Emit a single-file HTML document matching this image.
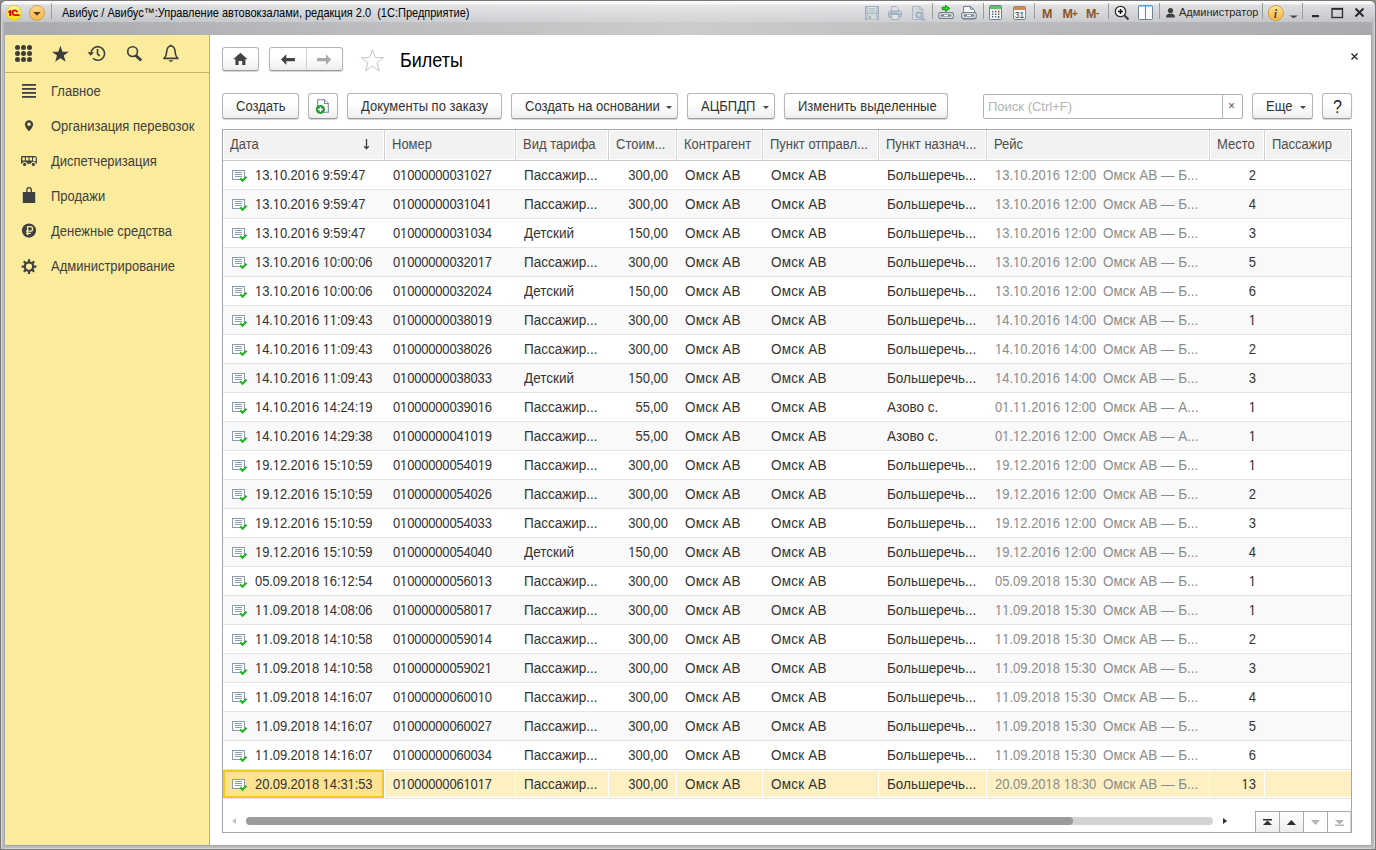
<!DOCTYPE html><html><head><meta charset="utf-8"><style>*{box-sizing:border-box;margin:0;padding:0}
html,body{width:1376px;height:850px;overflow:hidden}
body{background:#8a8a84;font-family:"Liberation Sans",sans-serif;position:relative}
.abs{position:absolute}
#win{position:absolute;left:0;top:0;width:1376px;height:850px;border-radius:6px 6px 0 0;background:#787878}
#title{position:absolute;left:1px;top:1px;width:1374px;height:21px;border-radius:5px 5px 0 0;background:linear-gradient(90deg,rgba(255,255,255,0) 0,rgba(255,255,255,.28) 50%,rgba(255,255,255,0) 100%),linear-gradient(#fbfbfb 0,#f6f6f6 3px,#dcdde0 4px,#d0d1d4 12px,#c3c4c7 21px)}
#band{position:absolute;left:5px;top:22px;width:1366px;height:13px;background:linear-gradient(90deg,rgba(255,255,255,0) 0,rgba(255,255,255,.4) 50%,rgba(255,255,255,0) 100%),linear-gradient(#abacaf,#a8a9ac)}
#lframe{position:absolute;left:1px;top:22px;width:4px;height:827px;background:linear-gradient(90deg,#d6d6d6 0,#d6d6d6 1px,#bdbdbd 1px,#b9b9b9 3px,#a3a6ab 3px)}
#rframe{position:absolute;left:1371px;top:22px;width:4px;height:827px;background:linear-gradient(90deg,#a3a6ab 0,#a3a6ab 1px,#b9b9b9 1px,#bdbdbd 3px,#d6d6d6 3px)}
#bframe{position:absolute;left:4px;top:845px;width:1368px;height:4px;background:linear-gradient(#a3a6ab 0,#a3a6ab 1px,#b9b9b9 1px,#bdbdbd 3px,#d6d6d6 3px)}
#side{position:absolute;left:5px;top:35px;width:205px;height:810px;background:#fbeb9c;border-right:1px solid #bfb262}
#content{position:absolute;left:210px;top:35px;width:1161px;height:810px;background:#fff}
.ttl{position:absolute;left:62px;top:4px;font-size:11px;color:#000;white-space:nowrap;line-height:16px}
.sdiv{position:absolute;left:5px;top:72px;width:204px;height:1px;background:#c3b566}
.nav{position:absolute;left:51px;font-size:13px;color:#404040;white-space:nowrap;line-height:16px}
.btn{position:absolute;height:26px;border:1px solid #b5b5b5;border-bottom-color:#9a9a9a;border-radius:3px;background:linear-gradient(#ffffff 40%,#eeeeee);box-shadow:0 1px 1px rgba(0,0,0,.18);font-size:13px;color:#333;line-height:24px;white-space:nowrap}
.btn span{position:absolute;top:1px}
.dd{position:absolute;width:0;height:0;border-left:3px solid transparent;border-right:3px solid transparent;border-top:3px solid #444}
#tbl{position:absolute;left:222px;top:129px;width:1130px;height:704px;border:1px solid #a5a5a5;background:#fff;overflow:hidden}
.hcell{position:absolute;top:131px;height:28px;background:#f2f2f2;font-size:13px;color:#4d4d4d;line-height:28px;white-space:nowrap}
.hsep{position:absolute;top:130px;width:1px;height:30px;background:#d2d2d2}
.hline{position:absolute;left:223px;top:160px;width:1128px;height:1px;background:#cdcdcd}
.row{position:absolute;left:223px;width:1128px;height:29px;border-bottom:1px solid #e4e4e4;background:#fff}
.row.alt{background:#f9f9f9}
.row.sel{background:#fff}
.vsep{position:absolute;top:0;width:1px;height:28px;background:#fff}
.selcell{position:absolute;left:0;top:0;width:161px;height:28px;border:2px solid #f8c51c;background:#fde292}
.c{position:absolute;top:0;line-height:29px;font-size:13px;color:#333;white-space:nowrap}
.c.g{color:#8c8c8c}
.ic{position:absolute}
.c.n{letter-spacing:-0.18px}
.c.t{font-size:13.5px}
.c.o{letter-spacing:0.2px}
.selbg{position:absolute;top:1px;height:26px;background:#fdf0c2}
.c{transform:scaleY(1.1);transform-origin:0 19px}
.nav{transform:scaleY(1.1);transform-origin:0 12.5px}
.hcell span{transform:scaleY(1.1);transform-origin:0 18.5px}
.btn span{transform:scaleY(1.1);transform-origin:0 16.5px}
.ttl{transform:scaleY(1.1);transform-origin:0 11.98px}
.c.d{letter-spacing:-0.1px}
.q1{font-style:normal;display:inline-block;clip-path:polygon(0 0,100% 0,100% 18px,4.6px 18px,4.6px 100%,3.1px 100%,3.1px 18px,0 18px)}
</style></head><body><div id="win"></div>
<div id="title"></div>
<div id="lframe"></div><div id="rframe"></div><div id="bframe"></div>
<div id="band"></div>
<svg class="abs" style="left:0;top:0" width="1376" height="22" viewBox="0 0 1376 22">
 <!-- 1C logo -->
 <defs>
  <linearGradient id="gy" x1="0" y1="0" x2="0" y2="1"><stop offset="0" stop-color="#fff6a8"/><stop offset="1" stop-color="#ffe000"/></linearGradient>
  <linearGradient id="go" x1="0" y1="0" x2="0" y2="1"><stop offset="0" stop-color="#ffd490"/><stop offset="1" stop-color="#ffb844"/></linearGradient>
  <linearGradient id="gi" x1="0" y1="0" x2="0" y2="1"><stop offset="0" stop-color="#ffe49a"/><stop offset="1" stop-color="#f5b43c"/></linearGradient>
 </defs>
 <circle cx="14" cy="12.9" r="7.5" fill="url(#gy)" stroke="#e3c94a" stroke-width="1"/>
 <path d="M8.1 11.6 L10.2 10 L11.1 10 L11.1 15.9 L9.2 15.9 L9.2 12.2 L8.3 12.7Z" fill="#e00000"/>
 <path d="M17.1 12.3 A2.35 2.35 0 1 0 14.7 15.1 H19.5" fill="none" stroke="#e00000" stroke-width="1.7"/>
 <circle cx="37" cy="12.9" r="7.5" fill="url(#go)" stroke="#c9a24a" stroke-width="1"/>
 <path d="M33.2 12 L40.8 12 L37 15.7Z" fill="#4d3d22"/>
 <rect x="51" y="3" width="1" height="16" fill="#9c9c9c"/>
 <!-- disabled icons -->
 <rect x="865.5" y="6.5" width="13" height="13" fill="#b9c4d1" stroke="#a2afbf" stroke-width="1"/>
 <rect x="868" y="7" width="8" height="5" fill="#dfe3e8"/>
 <path d="M869 8.6 H875 M869 10.6 H875" stroke="#a7b6c6" stroke-width="1"/>
 <rect x="868" y="14.5" width="8" height="5" fill="#d3dcd3"/>
 <rect x="869" y="16" width="2" height="3" fill="#a2afbf"/>
 <path d="M891.5 6.5 H896.5 L898.5 8.5 V11 H891.5Z" fill="#e2e2e2" stroke="#a5b2c1" stroke-width="1"/>
 <rect x="888.5" y="11" width="13" height="6.5" rx="1.8" fill="#b6c1ce" stroke="#a2afbf" stroke-width="1"/>
 <path d="M890 13.3 H900" stroke="#98a6b6" stroke-width="0.9"/>
 <rect x="897.5" y="12" width="1" height="1" fill="#eef"/><rect x="899.3" y="12" width="1" height="1" fill="#eef"/>
 <rect x="891.5" y="14.5" width="7" height="5" fill="#e4e4e4" stroke="#a5b2c1" stroke-width="1"/>
 <path d="M912.5 6.5 L919.8 6.5 L923 9.7 L923 19.5 L912.5 19.5Z" fill="#d8d8d8" stroke="#a9b6c5" stroke-width="1"/>
 <path d="M919.8 6.5 V9.7 H923" fill="none" stroke="#a9b6c5" stroke-width="1"/>
 <circle cx="919" cy="15" r="2.7" fill="#d8d8d8" stroke="#9fb0bf" stroke-width="1.8"/>
 <path d="M921 17 L924.5 20.5" stroke="#9fb0bf" stroke-width="2.2"/>
 <rect x="932" y="3" width="1" height="16" fill="#9c9c9c"/>
 <!-- link icons -->
 <path d="M942.2 7.2 H945.5 V5.4 L949.8 8.4 L945.5 11.4 V9.6 H942.2Z" fill="#22e022" stroke="#0d6e0d" stroke-width="0.8" stroke-linejoin="round"/>
 <rect x="938.7" y="12.6" width="14.6" height="5.8" rx="2" fill="#fafafa" stroke="#707d8a" stroke-width="1.1"/>
 <rect x="940.4" y="14.3" width="11.2" height="2.4" rx="0.8" fill="#7a8794"/>
 <rect x="944" y="14.9" width="4" height="1.2" fill="#fff"/>
 <path d="M963.6 6.4 H970.5 L974.5 10.4 V12.6 H963.6Z" fill="#fbfbfb" stroke="#6c7a88" stroke-width="1"/>
 <path d="M970.5 6.4 V9.2 H973.8" fill="none" stroke="#6c7a88" stroke-width="1"/>
 <rect x="961.6" y="12.6" width="14.6" height="5.8" rx="2" fill="#fafafa" stroke="#707d8a" stroke-width="1.1"/>
 <rect x="963.3" y="14.3" width="11.2" height="2.4" rx="0.8" fill="#7a8794"/>
 <rect x="967" y="14.9" width="4" height="1.2" fill="#fff"/>
 <rect x="963" y="18.6" width="12" height="1.2" fill="#8593a1"/>
 <rect x="983" y="3" width="1" height="16" fill="#9c9c9c"/>
 <!-- calculator -->
 <rect x="989.5" y="5.5" width="12" height="14" rx="1" fill="#eef2f6" stroke="#6f7f90" stroke-width="1"/>
 <rect x="990" y="6" width="11" height="3" fill="#5ec35e"/>
 <g fill="#44505c"><rect x="992" y="11" width="1.3" height="1.3"/><rect x="995" y="11" width="1.3" height="1.3"/><rect x="992" y="13.5" width="1.3" height="1.3"/><rect x="995" y="13.5" width="1.3" height="1.3"/><rect x="998" y="13.5" width="1.3" height="1.3"/><rect x="992" y="16" width="1.3" height="1.3"/><rect x="995" y="16" width="1.3" height="1.3"/><rect x="998" y="16" width="1.3" height="2"/></g>
 <rect x="998" y="10.5" width="1.3" height="2" fill="#e03030"/>
 <!-- calendar -->
 <rect x="1013.5" y="6.5" width="12" height="13" rx="1.5" fill="#f8f8f8" stroke="#7b8794" stroke-width="1"/>
 <path d="M1013.5 10 L1013.5 8 Q1013.5 6.5 1015 6.5 L1024 6.5 Q1025.5 6.5 1025.5 8 L1025.5 10Z" fill="#c98a55"/>
 <text x="1019.5" y="18.2" font-size="8.5" font-family="Liberation Sans" text-anchor="middle" fill="#333">31</text>
 <rect x="1034" y="3" width="1" height="16" fill="#9c9c9c"/>
 <!-- M buttons -->
 <g font-family="Liberation Sans" font-weight="bold" fill="#8c5526" font-size="12.5">
  <text x="1042" y="17.8">M</text>
  <text x="1062.5" y="17.8">M</text><text x="1072" y="16.5" font-size="10">+</text>
  <text x="1086" y="17.8">M</text><text x="1096" y="16" font-size="10">-</text>
 </g>
 <rect x="1108" y="3" width="1" height="16" fill="#9c9c9c"/>
 <!-- zoom -->
 <circle cx="1120.5" cy="11.5" r="5.2" fill="#fafafa" stroke="#2f2f2f" stroke-width="1.3"/>
 <path d="M1118 11.5 H1123 M1120.5 9 V14" stroke="#111" stroke-width="1.5"/>
 <path d="M1124.5 15.5 L1128.5 19.5" stroke="#3a3a3a" stroke-width="2"/>
 <!-- panel -->
 <rect x="1138.5" y="5.5" width="14" height="14" rx="1" fill="#fafafa" stroke="#6f7f90" stroke-width="1"/>
 <rect x="1139" y="5" width="13" height="1.5" fill="#4aa0e8"/>
 <rect x="1145" y="6" width="1" height="13" fill="#6f7f90"/>
 <rect x="1159" y="3" width="1" height="16" fill="#9c9c9c"/>
 <!-- user -->
 <circle cx="1170.5" cy="10.5" r="2.6" fill="#3f3f3f"/>
 <path d="M1166 17.5 C1166 14.5 1167.8 13.5 1170.5 13.5 C1173.2 13.5 1175 14.5 1175 17.5Z" fill="#3f3f3f"/>
 <rect x="1262" y="3" width="1" height="16" fill="#9c9c9c"/>
 <circle cx="1275.8" cy="13" r="7.6" fill="url(#gi)" stroke="#d0a040" stroke-width="1"/>
 <text x="1275.5" y="17.5" font-family="Liberation Serif" font-weight="bold" font-style="italic" font-size="12" text-anchor="middle" fill="#5a4a30">i</text>
 <path d="M1289.5 15.5 H1298 L1293.8 18.2Z" fill="#444"/>
 <rect x="1302" y="3" width="1" height="16" fill="#9c9c9c"/>
 <rect x="1312" y="15" width="7" height="2.2" fill="#2a2a2a"/>
 <rect x="1332" y="8.5" width="10.5" height="9" fill="none" stroke="#2a2a2a" stroke-width="1.3"/>
 <rect x="1332" y="8" width="10.5" height="1.8" fill="#2a2a2a"/>
 <path d="M1355.5 8.5 L1363.5 16.5 M1363.5 8.5 L1355.5 16.5" stroke="#2a2a2a" stroke-width="2"/>
</svg>
<div class="abs" style="left:1179px;top:5px;font-size:11px;line-height:14px;color:#302818;white-space:nowrap">Администратор</div>
<div class="ttl" style="top:5px">Авибус / Авибус™:Управление автовокзалами, редакция 2.0&nbsp; (1С:Предприятие)</div>
<div id="side"></div>
<div class="sdiv"></div>
<div id="content"></div>
<svg class="abs" style="left:0;top:35px" width="210" height="250" viewBox="0 35 210 250">
 <g fill="#3d3d3d">
  <circle cx="17.5" cy="47.5" r="2.5"/><circle cx="23.5" cy="47.5" r="2.5"/><circle cx="29.5" cy="47.5" r="2.5"/>
  <circle cx="17.5" cy="53.5" r="2.5"/><circle cx="23.5" cy="53.5" r="2.5"/><circle cx="29.5" cy="53.5" r="2.5"/>
  <circle cx="17.5" cy="59.5" r="2.5"/><circle cx="23.5" cy="59.5" r="2.5"/><circle cx="29.5" cy="59.5" r="2.5"/>
  <path d="M60.4 45.8 L62.5 51.7 L68.8 51.8 L63.8 55.6 L65.6 61.8 L60.4 58.2 L55.2 61.8 L57 55.6 L52 51.8 L58.3 51.7Z"/>
 </g>
 <g fill="none" stroke="#3d3d3d" stroke-width="1.6">
  <path d="M91 53.5 A6.8 6.8 0 1 1 93 58.3"/>
  <path d="M97.5 49 V53.8 L99.8 56"/>
  <circle cx="132.6" cy="51.6" r="4.9"/>
 </g>
 <path d="M87.5 52.2 L94 52.2 L90.8 55.8Z" fill="#3d3d3d"/>
 <path d="M135.8 55.5 L141.2 60.5" stroke="#3d3d3d" stroke-width="3"/>
 <path d="M170.9 45.8 C167.6 46.3 166.7 49.8 166.5 53 C166.3 55.6 165.4 57.2 163.9 58.4 L177.9 58.4 C176.4 57.2 175.5 55.6 175.3 53 C175.1 49.8 174.2 46.3 170.9 45.8Z" fill="none" stroke="#3d3d3d" stroke-width="1.6" stroke-linejoin="round"/>
 <circle cx="170.9" cy="45.3" r="0.9" fill="#3d3d3d"/>
 <path d="M168.6 60.2 H173.2 Q172.6 61.7 170.9 61.7 Q169.2 61.7 168.6 60.2Z" fill="#3d3d3d"/>
 <g fill="#404040">
  <rect x="22" y="84" width="14" height="1.8"/><rect x="22" y="88" width="14" height="1.8"/><rect x="22" y="92" width="14" height="1.8"/><rect x="22" y="96" width="14" height="1.8"/>
  <path d="M29 120.3 C26.6 120.3 24.9 122.1 24.9 124.4 C24.9 127.2 29 131.2 29 131.2 C29 131.2 33.1 127.2 33.1 124.4 C33.1 122.1 31.4 120.3 29 120.3Z"/>
  <path d="M22.3 156 H35 Q36.9 156 36.9 158.5 V163.7 H21 V157.3 Q21 156 22.3 156Z"/>
  <rect x="22.8" y="192" width="12.4" height="11"/>
  <circle cx="29" cy="230.6" r="7.1"/>
 </g>
 <circle cx="29" cy="124.3" r="1.7" fill="#fbeb9c"/>
 <g fill="#fbeb9c">
  <rect x="22.3" y="157.3" width="2.6" height="3.2" rx="0.6"/><rect x="25.9" y="157.3" width="2.6" height="3.2" rx="0.6"/><rect x="29.5" y="157.3" width="2.6" height="3.2" rx="0.6"/><rect x="33.1" y="157.3" width="2.6" height="4" rx="0.6"/>
  <circle cx="24.6" cy="164.4" r="2.6"/><circle cx="33.4" cy="164.4" r="2.6"/>
 </g>
 <g fill="#404040"><circle cx="24.6" cy="164.4" r="1.6"/><circle cx="33.4" cy="164.4" r="1.6"/></g>
 <path d="M26.9 192.5 V190 Q26.9 187.7 29.1 187.7 Q31.3 187.7 31.3 190 V192.5" fill="none" stroke="#404040" stroke-width="1.3"/>
 <path d="M27.6 235.3 V226.6 H30.3 Q32.6 226.6 32.6 228.9 Q32.6 231.2 30.3 231.2 H26 M26 233.3 H30.8" fill="none" stroke="#fbeb9c" stroke-width="1.3"/>
 <circle cx="29" cy="266.6" r="4.2" fill="none" stroke="#404040" stroke-width="2.2"/>
 <g stroke="#404040" stroke-width="2.2">
  <path d="M29 259.2 V262 M29 271.2 V274 M21.6 266.6 H24.4 M33.6 266.6 H36.4 M23.8 261.4 L25.7 263.3 M32.3 269.9 L34.2 271.8 M23.8 271.8 L25.7 269.9 M32.3 263.3 L34.2 261.4"/>
 </g>
</svg>
<div class="nav" style="top:84px">Главное</div>
<div class="nav" style="top:119px">Организация перевозок</div>
<div class="nav" style="top:154px">Диспетчеризация</div>
<div class="nav" style="top:189px">Продажи</div>
<div class="nav" style="top:224px">Денежные средства</div>
<div class="nav" style="top:259px">Администрирование</div>

<div class="btn" style="left:222px;top:47px;width:37px;height:24px"></div>
<div class="btn" style="left:269px;top:47px;width:74px;height:24px"></div>
<div class="abs" style="left:400px;top:49px;font-size:18px;color:#000;line-height:24px;transform:scaleY(1.1);transform-origin:0 17.96px">Билеты</div>

<div class="btn" style="left:222px;top:93px;width:77px"><span style="left:13px">Создать</span></div>
<div class="btn" style="left:308px;top:93px;width:30px"></div>
<div class="btn" style="left:347px;top:93px;width:155px"><span style="left:13px">Документы по заказу</span></div>
<div class="btn" style="left:511px;top:93px;width:167px"><span style="left:13px">Создать на основании</span><i class="dd" style="left:154px;top:12px"></i></div>
<div class="btn" style="left:687px;top:93px;width:88px"><span style="left:13px">АЦБПДП</span><i class="dd" style="left:75px;top:12px"></i></div>
<div class="btn" style="left:784px;top:93px;width:164px"><span style="left:13px">Изменить выделенные</span></div>
<div class="abs" style="left:983px;top:94px;width:260px;height:25px;border:1px solid #b0b0b0;border-radius:2px;background:#fff"><span class="abs" style="left:4px;top:0;line-height:23px;font-size:13px;color:#b3b3b3;white-space:nowrap">Поиск (Ctrl+F)</span><div class="abs" style="left:238px;top:0;width:1px;height:23px;background:#b8b8b8"></div><span class="abs" style="left:244px;top:0;line-height:22px;font-size:12px;color:#555">×</span></div>
<div class="btn" style="left:1252px;top:93px;width:61px"><span style="left:13px">Еще</span><i class="dd" style="left:47px;top:12px"></i></div>
<div class="btn" style="left:1322px;top:93px;width:30px"><span style="left:10px;top:2px;font-size:16px;color:#1a1a1a">?</span></div>

<svg class="abs" style="left:210px;top:35px" width="1161" height="90" viewBox="210 35 1161 90">
 <path d="M240.4 52.7 L247.6 59.3 L245.4 59.3 L245.4 64.9 L242.2 64.9 L242.2 61 L238.6 61 L238.6 64.9 L235.4 64.9 L235.4 59.3 L233.2 59.3Z" fill="#444"/>
 <path d="M281 59.6 L286.3 54.2 L286.3 57.9 L294.9 57.9 L294.9 61.3 L286.3 61.3 L286.3 65 Z" fill="#444"/>
 <path d="M331.2 59.6 L325.9 54.2 L325.9 57.9 L317.1 57.9 L317.1 61.3 L325.9 61.3 L325.9 65 Z" fill="#a9a9a9"/>
 <rect x="306" y="48" width="1" height="22" fill="#d0d0d0"/>
 <path d="M372.4 49.6 L375.2 57.5 L383.6 57.7 L376.9 62.8 L379.3 70.8 L372.4 66 L365.5 70.8 L367.9 62.8 L361.2 57.7 L369.6 57.5Z" fill="#fff" stroke="#c2c6cb" stroke-width="1"/>
 <path d="M1351.5 53.5 L1357.5 59.5 M1357.5 53.5 L1351.5 59.5" stroke="#222" stroke-width="1.25"/>
 <!-- doc add icon -->
 <path d="M317.7 99.7 L324.5 99.7 L328.3 103.5 L328.3 112.3 L317.7 112.3Z" fill="#fff" stroke="#74859a" stroke-width="1.1"/>
 <path d="M324.5 99.7 L324.5 103.5 L328.3 103.5" fill="#fff" stroke="#74859a" stroke-width="1.1"/>
 <circle cx="320.4" cy="109.4" r="4.5" fill="#1f9a2e"/>
 <path d="M317.9 109.5 H322.9 M320.4 107 V112" stroke="#fff" stroke-width="1.5"/>
</svg>
<div id="tbl"></div><div class="hcell" style="left:224px;width:159px"><span style="position:absolute;left:6px">Дата</span></div><div class="hcell" style="left:386px;width:128px"><span style="position:absolute;left:6px">Номер</span></div><div class="hsep" style="left:384px"></div><div class="hcell" style="left:517px;width:90px"><span style="position:absolute;left:6px">Вид тарифа</span></div><div class="hsep" style="left:515px"></div><div class="hcell" style="left:610px;width:65px"><span style="position:absolute;left:6px">Стоим...</span></div><div class="hsep" style="left:608px"></div><div class="hcell" style="left:678px;width:83px"><span style="position:absolute;left:6px">Контрагент</span></div><div class="hsep" style="left:676px"></div><div class="hcell" style="left:764px;width:113px"><span style="position:absolute;left:6px">Пункт отправл...</span></div><div class="hsep" style="left:762px"></div><div class="hcell" style="left:880px;width:105px"><span style="position:absolute;left:6px">Пункт назнач...</span></div><div class="hsep" style="left:878px"></div><div class="hcell" style="left:988px;width:220px"><span style="position:absolute;left:6px">Рейс</span></div><div class="hsep" style="left:986px"></div><div class="hcell" style="left:1211px;width:52px"><span style="position:absolute;left:6px">Место</span></div><div class="hsep" style="left:1209px"></div><div class="hcell" style="left:1266px;width:84px"><span style="position:absolute;left:6px">Пассажир</span></div><div class="hsep" style="left:1264px"></div><svg class="abs" style="left:360px;top:136px" width="14" height="16" viewBox="360 136 14 16"><path d="M366.5 139 V148" stroke="#3c3c3c" stroke-width="1.3"/><path d="M364.2 146.3 L366.5 148.6 L368.8 146.3" fill="none" stroke="#3c3c3c" stroke-width="1.3"/></svg><div class="hline"></div>
<div class="row" style="top:161px"><svg class="ic" style="left:9px;top:9px" width="17" height="14" viewBox="0 0 17 14"><rect x="0.5" y="0.5" width="12" height="9" fill="#fff" stroke="#8a9bb0"/><path d="M3 2.5h7M3 4.5h7M3 6.5h7" stroke="#8f9cac" stroke-width="1"/><path d="M8.2 8.3l2.3 2.4 4-4" stroke="#22b622" stroke-width="2.1" fill="none"/></svg><span class="c d" style="left:32px"><i class="q1">1</i>3.<i class="q1">1</i>0.20<i class="q1">1</i>6 9:59:47</span><span class="c n" style="left:170px">0<i class="q1">1</i>00000003<i class="q1">1</i>027</span><span class="c t" style="left:301px">Пассажир...</span><span class="c r" style="right:683px">300,00</span><span class="c t o" style="left:462px">Омск АВ</span><span class="c t o" style="left:548px">Омск АВ</span><span class="c t" style="left:664px">Большеречь...</span><span class="c g" style="left:772px"><i class="q1">1</i>3.<i class="q1">1</i>0.20<i class="q1">1</i>6 <i class="q1">1</i>2:00</span><span class="c g t" style="left:880px">Омск АВ — Б...</span><span class="c r" style="right:95px">2</span></div><div class="row alt" style="top:190px"><svg class="ic" style="left:9px;top:9px" width="17" height="14" viewBox="0 0 17 14"><rect x="0.5" y="0.5" width="12" height="9" fill="#fff" stroke="#8a9bb0"/><path d="M3 2.5h7M3 4.5h7M3 6.5h7" stroke="#8f9cac" stroke-width="1"/><path d="M8.2 8.3l2.3 2.4 4-4" stroke="#22b622" stroke-width="2.1" fill="none"/></svg><span class="c d" style="left:32px"><i class="q1">1</i>3.<i class="q1">1</i>0.20<i class="q1">1</i>6 9:59:47</span><span class="c n" style="left:170px">0<i class="q1">1</i>00000003<i class="q1">1</i>04<i class="q1">1</i></span><span class="c t" style="left:301px">Пассажир...</span><span class="c r" style="right:683px">300,00</span><span class="c t o" style="left:462px">Омск АВ</span><span class="c t o" style="left:548px">Омск АВ</span><span class="c t" style="left:664px">Большеречь...</span><span class="c g" style="left:772px"><i class="q1">1</i>3.<i class="q1">1</i>0.20<i class="q1">1</i>6 <i class="q1">1</i>2:00</span><span class="c g t" style="left:880px">Омск АВ — Б...</span><span class="c r" style="right:95px">4</span></div><div class="row" style="top:219px"><svg class="ic" style="left:9px;top:9px" width="17" height="14" viewBox="0 0 17 14"><rect x="0.5" y="0.5" width="12" height="9" fill="#fff" stroke="#8a9bb0"/><path d="M3 2.5h7M3 4.5h7M3 6.5h7" stroke="#8f9cac" stroke-width="1"/><path d="M8.2 8.3l2.3 2.4 4-4" stroke="#22b622" stroke-width="2.1" fill="none"/></svg><span class="c d" style="left:32px"><i class="q1">1</i>3.<i class="q1">1</i>0.20<i class="q1">1</i>6 9:59:47</span><span class="c n" style="left:170px">0<i class="q1">1</i>00000003<i class="q1">1</i>034</span><span class="c t" style="left:301px">Детский</span><span class="c r" style="right:683px"><i class="q1">1</i>50,00</span><span class="c t o" style="left:462px">Омск АВ</span><span class="c t o" style="left:548px">Омск АВ</span><span class="c t" style="left:664px">Большеречь...</span><span class="c g" style="left:772px"><i class="q1">1</i>3.<i class="q1">1</i>0.20<i class="q1">1</i>6 <i class="q1">1</i>2:00</span><span class="c g t" style="left:880px">Омск АВ — Б...</span><span class="c r" style="right:95px">3</span></div><div class="row alt" style="top:248px"><svg class="ic" style="left:9px;top:9px" width="17" height="14" viewBox="0 0 17 14"><rect x="0.5" y="0.5" width="12" height="9" fill="#fff" stroke="#8a9bb0"/><path d="M3 2.5h7M3 4.5h7M3 6.5h7" stroke="#8f9cac" stroke-width="1"/><path d="M8.2 8.3l2.3 2.4 4-4" stroke="#22b622" stroke-width="2.1" fill="none"/></svg><span class="c d" style="left:32px"><i class="q1">1</i>3.<i class="q1">1</i>0.20<i class="q1">1</i>6 <i class="q1">1</i>0:00:06</span><span class="c n" style="left:170px">0<i class="q1">1</i>0000000320<i class="q1">1</i>7</span><span class="c t" style="left:301px">Пассажир...</span><span class="c r" style="right:683px">300,00</span><span class="c t o" style="left:462px">Омск АВ</span><span class="c t o" style="left:548px">Омск АВ</span><span class="c t" style="left:664px">Большеречь...</span><span class="c g" style="left:772px"><i class="q1">1</i>3.<i class="q1">1</i>0.20<i class="q1">1</i>6 <i class="q1">1</i>2:00</span><span class="c g t" style="left:880px">Омск АВ — Б...</span><span class="c r" style="right:95px">5</span></div><div class="row" style="top:277px"><svg class="ic" style="left:9px;top:9px" width="17" height="14" viewBox="0 0 17 14"><rect x="0.5" y="0.5" width="12" height="9" fill="#fff" stroke="#8a9bb0"/><path d="M3 2.5h7M3 4.5h7M3 6.5h7" stroke="#8f9cac" stroke-width="1"/><path d="M8.2 8.3l2.3 2.4 4-4" stroke="#22b622" stroke-width="2.1" fill="none"/></svg><span class="c d" style="left:32px"><i class="q1">1</i>3.<i class="q1">1</i>0.20<i class="q1">1</i>6 <i class="q1">1</i>0:00:06</span><span class="c n" style="left:170px">0<i class="q1">1</i>000000032024</span><span class="c t" style="left:301px">Детский</span><span class="c r" style="right:683px"><i class="q1">1</i>50,00</span><span class="c t o" style="left:462px">Омск АВ</span><span class="c t o" style="left:548px">Омск АВ</span><span class="c t" style="left:664px">Большеречь...</span><span class="c g" style="left:772px"><i class="q1">1</i>3.<i class="q1">1</i>0.20<i class="q1">1</i>6 <i class="q1">1</i>2:00</span><span class="c g t" style="left:880px">Омск АВ — Б...</span><span class="c r" style="right:95px">6</span></div><div class="row alt" style="top:306px"><svg class="ic" style="left:9px;top:9px" width="17" height="14" viewBox="0 0 17 14"><rect x="0.5" y="0.5" width="12" height="9" fill="#fff" stroke="#8a9bb0"/><path d="M3 2.5h7M3 4.5h7M3 6.5h7" stroke="#8f9cac" stroke-width="1"/><path d="M8.2 8.3l2.3 2.4 4-4" stroke="#22b622" stroke-width="2.1" fill="none"/></svg><span class="c d" style="left:32px"><i class="q1">1</i>4.<i class="q1">1</i>0.20<i class="q1">1</i>6 <i class="q1">1</i><i class="q1">1</i>:09:43</span><span class="c n" style="left:170px">0<i class="q1">1</i>0000000380<i class="q1">1</i>9</span><span class="c t" style="left:301px">Пассажир...</span><span class="c r" style="right:683px">300,00</span><span class="c t o" style="left:462px">Омск АВ</span><span class="c t o" style="left:548px">Омск АВ</span><span class="c t" style="left:664px">Большеречь...</span><span class="c g" style="left:772px"><i class="q1">1</i>4.<i class="q1">1</i>0.20<i class="q1">1</i>6 <i class="q1">1</i>4:00</span><span class="c g t" style="left:880px">Омск АВ — Б...</span><span class="c r" style="right:95px"><i class="q1">1</i></span></div><div class="row" style="top:335px"><svg class="ic" style="left:9px;top:9px" width="17" height="14" viewBox="0 0 17 14"><rect x="0.5" y="0.5" width="12" height="9" fill="#fff" stroke="#8a9bb0"/><path d="M3 2.5h7M3 4.5h7M3 6.5h7" stroke="#8f9cac" stroke-width="1"/><path d="M8.2 8.3l2.3 2.4 4-4" stroke="#22b622" stroke-width="2.1" fill="none"/></svg><span class="c d" style="left:32px"><i class="q1">1</i>4.<i class="q1">1</i>0.20<i class="q1">1</i>6 <i class="q1">1</i><i class="q1">1</i>:09:43</span><span class="c n" style="left:170px">0<i class="q1">1</i>000000038026</span><span class="c t" style="left:301px">Пассажир...</span><span class="c r" style="right:683px">300,00</span><span class="c t o" style="left:462px">Омск АВ</span><span class="c t o" style="left:548px">Омск АВ</span><span class="c t" style="left:664px">Большеречь...</span><span class="c g" style="left:772px"><i class="q1">1</i>4.<i class="q1">1</i>0.20<i class="q1">1</i>6 <i class="q1">1</i>4:00</span><span class="c g t" style="left:880px">Омск АВ — Б...</span><span class="c r" style="right:95px">2</span></div><div class="row alt" style="top:364px"><svg class="ic" style="left:9px;top:9px" width="17" height="14" viewBox="0 0 17 14"><rect x="0.5" y="0.5" width="12" height="9" fill="#fff" stroke="#8a9bb0"/><path d="M3 2.5h7M3 4.5h7M3 6.5h7" stroke="#8f9cac" stroke-width="1"/><path d="M8.2 8.3l2.3 2.4 4-4" stroke="#22b622" stroke-width="2.1" fill="none"/></svg><span class="c d" style="left:32px"><i class="q1">1</i>4.<i class="q1">1</i>0.20<i class="q1">1</i>6 <i class="q1">1</i><i class="q1">1</i>:09:43</span><span class="c n" style="left:170px">0<i class="q1">1</i>000000038033</span><span class="c t" style="left:301px">Детский</span><span class="c r" style="right:683px"><i class="q1">1</i>50,00</span><span class="c t o" style="left:462px">Омск АВ</span><span class="c t o" style="left:548px">Омск АВ</span><span class="c t" style="left:664px">Большеречь...</span><span class="c g" style="left:772px"><i class="q1">1</i>4.<i class="q1">1</i>0.20<i class="q1">1</i>6 <i class="q1">1</i>4:00</span><span class="c g t" style="left:880px">Омск АВ — Б...</span><span class="c r" style="right:95px">3</span></div><div class="row" style="top:393px"><svg class="ic" style="left:9px;top:9px" width="17" height="14" viewBox="0 0 17 14"><rect x="0.5" y="0.5" width="12" height="9" fill="#fff" stroke="#8a9bb0"/><path d="M3 2.5h7M3 4.5h7M3 6.5h7" stroke="#8f9cac" stroke-width="1"/><path d="M8.2 8.3l2.3 2.4 4-4" stroke="#22b622" stroke-width="2.1" fill="none"/></svg><span class="c d" style="left:32px"><i class="q1">1</i>4.<i class="q1">1</i>0.20<i class="q1">1</i>6 <i class="q1">1</i>4:24:<i class="q1">1</i>9</span><span class="c n" style="left:170px">0<i class="q1">1</i>0000000390<i class="q1">1</i>6</span><span class="c t" style="left:301px">Пассажир...</span><span class="c r" style="right:683px">55,00</span><span class="c t o" style="left:462px">Омск АВ</span><span class="c t o" style="left:548px">Омск АВ</span><span class="c t" style="left:664px">Азово с.</span><span class="c g" style="left:772px">0<i class="q1">1</i>.<i class="q1">1</i><i class="q1">1</i>.20<i class="q1">1</i>6 <i class="q1">1</i>2:00</span><span class="c g t" style="left:880px">Омск АВ — А...</span><span class="c r" style="right:95px"><i class="q1">1</i></span></div><div class="row alt" style="top:422px"><svg class="ic" style="left:9px;top:9px" width="17" height="14" viewBox="0 0 17 14"><rect x="0.5" y="0.5" width="12" height="9" fill="#fff" stroke="#8a9bb0"/><path d="M3 2.5h7M3 4.5h7M3 6.5h7" stroke="#8f9cac" stroke-width="1"/><path d="M8.2 8.3l2.3 2.4 4-4" stroke="#22b622" stroke-width="2.1" fill="none"/></svg><span class="c d" style="left:32px"><i class="q1">1</i>4.<i class="q1">1</i>0.20<i class="q1">1</i>6 <i class="q1">1</i>4:29:38</span><span class="c n" style="left:170px">0<i class="q1">1</i>00000004<i class="q1">1</i>0<i class="q1">1</i>9</span><span class="c t" style="left:301px">Пассажир...</span><span class="c r" style="right:683px">55,00</span><span class="c t o" style="left:462px">Омск АВ</span><span class="c t o" style="left:548px">Омск АВ</span><span class="c t" style="left:664px">Азово с.</span><span class="c g" style="left:772px">0<i class="q1">1</i>.<i class="q1">1</i>2.20<i class="q1">1</i>6 <i class="q1">1</i>2:00</span><span class="c g t" style="left:880px">Омск АВ — А...</span><span class="c r" style="right:95px"><i class="q1">1</i></span></div><div class="row" style="top:451px"><svg class="ic" style="left:9px;top:9px" width="17" height="14" viewBox="0 0 17 14"><rect x="0.5" y="0.5" width="12" height="9" fill="#fff" stroke="#8a9bb0"/><path d="M3 2.5h7M3 4.5h7M3 6.5h7" stroke="#8f9cac" stroke-width="1"/><path d="M8.2 8.3l2.3 2.4 4-4" stroke="#22b622" stroke-width="2.1" fill="none"/></svg><span class="c d" style="left:32px"><i class="q1">1</i>9.<i class="q1">1</i>2.20<i class="q1">1</i>6 <i class="q1">1</i>5:<i class="q1">1</i>0:59</span><span class="c n" style="left:170px">0<i class="q1">1</i>0000000540<i class="q1">1</i>9</span><span class="c t" style="left:301px">Пассажир...</span><span class="c r" style="right:683px">300,00</span><span class="c t o" style="left:462px">Омск АВ</span><span class="c t o" style="left:548px">Омск АВ</span><span class="c t" style="left:664px">Большеречь...</span><span class="c g" style="left:772px"><i class="q1">1</i>9.<i class="q1">1</i>2.20<i class="q1">1</i>6 <i class="q1">1</i>2:00</span><span class="c g t" style="left:880px">Омск АВ — Б...</span><span class="c r" style="right:95px"><i class="q1">1</i></span></div><div class="row alt" style="top:480px"><svg class="ic" style="left:9px;top:9px" width="17" height="14" viewBox="0 0 17 14"><rect x="0.5" y="0.5" width="12" height="9" fill="#fff" stroke="#8a9bb0"/><path d="M3 2.5h7M3 4.5h7M3 6.5h7" stroke="#8f9cac" stroke-width="1"/><path d="M8.2 8.3l2.3 2.4 4-4" stroke="#22b622" stroke-width="2.1" fill="none"/></svg><span class="c d" style="left:32px"><i class="q1">1</i>9.<i class="q1">1</i>2.20<i class="q1">1</i>6 <i class="q1">1</i>5:<i class="q1">1</i>0:59</span><span class="c n" style="left:170px">0<i class="q1">1</i>000000054026</span><span class="c t" style="left:301px">Пассажир...</span><span class="c r" style="right:683px">300,00</span><span class="c t o" style="left:462px">Омск АВ</span><span class="c t o" style="left:548px">Омск АВ</span><span class="c t" style="left:664px">Большеречь...</span><span class="c g" style="left:772px"><i class="q1">1</i>9.<i class="q1">1</i>2.20<i class="q1">1</i>6 <i class="q1">1</i>2:00</span><span class="c g t" style="left:880px">Омск АВ — Б...</span><span class="c r" style="right:95px">2</span></div><div class="row" style="top:509px"><svg class="ic" style="left:9px;top:9px" width="17" height="14" viewBox="0 0 17 14"><rect x="0.5" y="0.5" width="12" height="9" fill="#fff" stroke="#8a9bb0"/><path d="M3 2.5h7M3 4.5h7M3 6.5h7" stroke="#8f9cac" stroke-width="1"/><path d="M8.2 8.3l2.3 2.4 4-4" stroke="#22b622" stroke-width="2.1" fill="none"/></svg><span class="c d" style="left:32px"><i class="q1">1</i>9.<i class="q1">1</i>2.20<i class="q1">1</i>6 <i class="q1">1</i>5:<i class="q1">1</i>0:59</span><span class="c n" style="left:170px">0<i class="q1">1</i>000000054033</span><span class="c t" style="left:301px">Пассажир...</span><span class="c r" style="right:683px">300,00</span><span class="c t o" style="left:462px">Омск АВ</span><span class="c t o" style="left:548px">Омск АВ</span><span class="c t" style="left:664px">Большеречь...</span><span class="c g" style="left:772px"><i class="q1">1</i>9.<i class="q1">1</i>2.20<i class="q1">1</i>6 <i class="q1">1</i>2:00</span><span class="c g t" style="left:880px">Омск АВ — Б...</span><span class="c r" style="right:95px">3</span></div><div class="row alt" style="top:538px"><svg class="ic" style="left:9px;top:9px" width="17" height="14" viewBox="0 0 17 14"><rect x="0.5" y="0.5" width="12" height="9" fill="#fff" stroke="#8a9bb0"/><path d="M3 2.5h7M3 4.5h7M3 6.5h7" stroke="#8f9cac" stroke-width="1"/><path d="M8.2 8.3l2.3 2.4 4-4" stroke="#22b622" stroke-width="2.1" fill="none"/></svg><span class="c d" style="left:32px"><i class="q1">1</i>9.<i class="q1">1</i>2.20<i class="q1">1</i>6 <i class="q1">1</i>5:<i class="q1">1</i>0:59</span><span class="c n" style="left:170px">0<i class="q1">1</i>000000054040</span><span class="c t" style="left:301px">Детский</span><span class="c r" style="right:683px"><i class="q1">1</i>50,00</span><span class="c t o" style="left:462px">Омск АВ</span><span class="c t o" style="left:548px">Омск АВ</span><span class="c t" style="left:664px">Большеречь...</span><span class="c g" style="left:772px"><i class="q1">1</i>9.<i class="q1">1</i>2.20<i class="q1">1</i>6 <i class="q1">1</i>2:00</span><span class="c g t" style="left:880px">Омск АВ — Б...</span><span class="c r" style="right:95px">4</span></div><div class="row" style="top:567px"><svg class="ic" style="left:9px;top:9px" width="17" height="14" viewBox="0 0 17 14"><rect x="0.5" y="0.5" width="12" height="9" fill="#fff" stroke="#8a9bb0"/><path d="M3 2.5h7M3 4.5h7M3 6.5h7" stroke="#8f9cac" stroke-width="1"/><path d="M8.2 8.3l2.3 2.4 4-4" stroke="#22b622" stroke-width="2.1" fill="none"/></svg><span class="c d" style="left:32px">05.09.20<i class="q1">1</i>8 <i class="q1">1</i>6:<i class="q1">1</i>2:54</span><span class="c n" style="left:170px">0<i class="q1">1</i>0000000560<i class="q1">1</i>3</span><span class="c t" style="left:301px">Пассажир...</span><span class="c r" style="right:683px">300,00</span><span class="c t o" style="left:462px">Омск АВ</span><span class="c t o" style="left:548px">Омск АВ</span><span class="c t" style="left:664px">Большеречь...</span><span class="c g" style="left:772px">05.09.20<i class="q1">1</i>8 <i class="q1">1</i>5:30</span><span class="c g t" style="left:880px">Омск АВ — Б...</span><span class="c r" style="right:95px"><i class="q1">1</i></span></div><div class="row alt" style="top:596px"><svg class="ic" style="left:9px;top:9px" width="17" height="14" viewBox="0 0 17 14"><rect x="0.5" y="0.5" width="12" height="9" fill="#fff" stroke="#8a9bb0"/><path d="M3 2.5h7M3 4.5h7M3 6.5h7" stroke="#8f9cac" stroke-width="1"/><path d="M8.2 8.3l2.3 2.4 4-4" stroke="#22b622" stroke-width="2.1" fill="none"/></svg><span class="c d" style="left:32px"><i class="q1">1</i><i class="q1">1</i>.09.20<i class="q1">1</i>8 <i class="q1">1</i>4:08:06</span><span class="c n" style="left:170px">0<i class="q1">1</i>0000000580<i class="q1">1</i>7</span><span class="c t" style="left:301px">Пассажир...</span><span class="c r" style="right:683px">300,00</span><span class="c t o" style="left:462px">Омск АВ</span><span class="c t o" style="left:548px">Омск АВ</span><span class="c t" style="left:664px">Большеречь...</span><span class="c g" style="left:772px"><i class="q1">1</i><i class="q1">1</i>.09.20<i class="q1">1</i>8 <i class="q1">1</i>5:30</span><span class="c g t" style="left:880px">Омск АВ — Б...</span><span class="c r" style="right:95px"><i class="q1">1</i></span></div><div class="row" style="top:625px"><svg class="ic" style="left:9px;top:9px" width="17" height="14" viewBox="0 0 17 14"><rect x="0.5" y="0.5" width="12" height="9" fill="#fff" stroke="#8a9bb0"/><path d="M3 2.5h7M3 4.5h7M3 6.5h7" stroke="#8f9cac" stroke-width="1"/><path d="M8.2 8.3l2.3 2.4 4-4" stroke="#22b622" stroke-width="2.1" fill="none"/></svg><span class="c d" style="left:32px"><i class="q1">1</i><i class="q1">1</i>.09.20<i class="q1">1</i>8 <i class="q1">1</i>4:<i class="q1">1</i>0:58</span><span class="c n" style="left:170px">0<i class="q1">1</i>0000000590<i class="q1">1</i>4</span><span class="c t" style="left:301px">Пассажир...</span><span class="c r" style="right:683px">300,00</span><span class="c t o" style="left:462px">Омск АВ</span><span class="c t o" style="left:548px">Омск АВ</span><span class="c t" style="left:664px">Большеречь...</span><span class="c g" style="left:772px"><i class="q1">1</i><i class="q1">1</i>.09.20<i class="q1">1</i>8 <i class="q1">1</i>5:30</span><span class="c g t" style="left:880px">Омск АВ — Б...</span><span class="c r" style="right:95px">2</span></div><div class="row alt" style="top:654px"><svg class="ic" style="left:9px;top:9px" width="17" height="14" viewBox="0 0 17 14"><rect x="0.5" y="0.5" width="12" height="9" fill="#fff" stroke="#8a9bb0"/><path d="M3 2.5h7M3 4.5h7M3 6.5h7" stroke="#8f9cac" stroke-width="1"/><path d="M8.2 8.3l2.3 2.4 4-4" stroke="#22b622" stroke-width="2.1" fill="none"/></svg><span class="c d" style="left:32px"><i class="q1">1</i><i class="q1">1</i>.09.20<i class="q1">1</i>8 <i class="q1">1</i>4:<i class="q1">1</i>0:58</span><span class="c n" style="left:170px">0<i class="q1">1</i>00000005902<i class="q1">1</i></span><span class="c t" style="left:301px">Пассажир...</span><span class="c r" style="right:683px">300,00</span><span class="c t o" style="left:462px">Омск АВ</span><span class="c t o" style="left:548px">Омск АВ</span><span class="c t" style="left:664px">Большеречь...</span><span class="c g" style="left:772px"><i class="q1">1</i><i class="q1">1</i>.09.20<i class="q1">1</i>8 <i class="q1">1</i>5:30</span><span class="c g t" style="left:880px">Омск АВ — Б...</span><span class="c r" style="right:95px">3</span></div><div class="row" style="top:683px"><svg class="ic" style="left:9px;top:9px" width="17" height="14" viewBox="0 0 17 14"><rect x="0.5" y="0.5" width="12" height="9" fill="#fff" stroke="#8a9bb0"/><path d="M3 2.5h7M3 4.5h7M3 6.5h7" stroke="#8f9cac" stroke-width="1"/><path d="M8.2 8.3l2.3 2.4 4-4" stroke="#22b622" stroke-width="2.1" fill="none"/></svg><span class="c d" style="left:32px"><i class="q1">1</i><i class="q1">1</i>.09.20<i class="q1">1</i>8 <i class="q1">1</i>4:<i class="q1">1</i>6:07</span><span class="c n" style="left:170px">0<i class="q1">1</i>0000000600<i class="q1">1</i>0</span><span class="c t" style="left:301px">Пассажир...</span><span class="c r" style="right:683px">300,00</span><span class="c t o" style="left:462px">Омск АВ</span><span class="c t o" style="left:548px">Омск АВ</span><span class="c t" style="left:664px">Большеречь...</span><span class="c g" style="left:772px"><i class="q1">1</i><i class="q1">1</i>.09.20<i class="q1">1</i>8 <i class="q1">1</i>5:30</span><span class="c g t" style="left:880px">Омск АВ — Б...</span><span class="c r" style="right:95px">4</span></div><div class="row alt" style="top:712px"><svg class="ic" style="left:9px;top:9px" width="17" height="14" viewBox="0 0 17 14"><rect x="0.5" y="0.5" width="12" height="9" fill="#fff" stroke="#8a9bb0"/><path d="M3 2.5h7M3 4.5h7M3 6.5h7" stroke="#8f9cac" stroke-width="1"/><path d="M8.2 8.3l2.3 2.4 4-4" stroke="#22b622" stroke-width="2.1" fill="none"/></svg><span class="c d" style="left:32px"><i class="q1">1</i><i class="q1">1</i>.09.20<i class="q1">1</i>8 <i class="q1">1</i>4:<i class="q1">1</i>6:07</span><span class="c n" style="left:170px">0<i class="q1">1</i>000000060027</span><span class="c t" style="left:301px">Пассажир...</span><span class="c r" style="right:683px">300,00</span><span class="c t o" style="left:462px">Омск АВ</span><span class="c t o" style="left:548px">Омск АВ</span><span class="c t" style="left:664px">Большеречь...</span><span class="c g" style="left:772px"><i class="q1">1</i><i class="q1">1</i>.09.20<i class="q1">1</i>8 <i class="q1">1</i>5:30</span><span class="c g t" style="left:880px">Омск АВ — Б...</span><span class="c r" style="right:95px">5</span></div><div class="row" style="top:741px"><svg class="ic" style="left:9px;top:9px" width="17" height="14" viewBox="0 0 17 14"><rect x="0.5" y="0.5" width="12" height="9" fill="#fff" stroke="#8a9bb0"/><path d="M3 2.5h7M3 4.5h7M3 6.5h7" stroke="#8f9cac" stroke-width="1"/><path d="M8.2 8.3l2.3 2.4 4-4" stroke="#22b622" stroke-width="2.1" fill="none"/></svg><span class="c d" style="left:32px"><i class="q1">1</i><i class="q1">1</i>.09.20<i class="q1">1</i>8 <i class="q1">1</i>4:<i class="q1">1</i>6:07</span><span class="c n" style="left:170px">0<i class="q1">1</i>000000060034</span><span class="c t" style="left:301px">Пассажир...</span><span class="c r" style="right:683px">300,00</span><span class="c t o" style="left:462px">Омск АВ</span><span class="c t o" style="left:548px">Омск АВ</span><span class="c t" style="left:664px">Большеречь...</span><span class="c g" style="left:772px"><i class="q1">1</i><i class="q1">1</i>.09.20<i class="q1">1</i>8 <i class="q1">1</i>5:30</span><span class="c g t" style="left:880px">Омск АВ — Б...</span><span class="c r" style="right:95px">6</span></div><div class="row alt sel" style="top:770px"><div class="selbg" style="left:162px;width:130px"></div><div class="selbg" style="left:293px;width:92px"></div><div class="selbg" style="left:386px;width:67px"></div><div class="selbg" style="left:454px;width:85px"></div><div class="selbg" style="left:540px;width:115px"></div><div class="selbg" style="left:656px;width:107px"></div><div class="selbg" style="left:764px;width:222px"></div><div class="selbg" style="left:987px;width:54px"></div><div class="selbg" style="left:1042px;width:86px"></div><div class="selcell"></div><svg class="ic" style="left:9px;top:9px" width="17" height="14" viewBox="0 0 17 14"><rect x="0.5" y="0.5" width="12" height="9" fill="#fff" stroke="#8a9bb0"/><path d="M3 2.5h7M3 4.5h7M3 6.5h7" stroke="#8f9cac" stroke-width="1"/><path d="M8.2 8.3l2.3 2.4 4-4" stroke="#22b622" stroke-width="2.1" fill="none"/></svg><span class="c d" style="left:32px">20.09.20<i class="q1">1</i>8 <i class="q1">1</i>4:3<i class="q1">1</i>:53</span><span class="c n" style="left:170px">0<i class="q1">1</i>00000006<i class="q1">1</i>0<i class="q1">1</i>7</span><span class="c t" style="left:301px">Пассажир...</span><span class="c r" style="right:683px">300,00</span><span class="c t o" style="left:462px">Омск АВ</span><span class="c t o" style="left:548px">Омск АВ</span><span class="c t" style="left:664px">Большеречь...</span><span class="c g" style="left:772px">20.09.20<i class="q1">1</i>8 <i class="q1">1</i>8:30</span><span class="c g t" style="left:880px">Омск АВ — Б...</span><span class="c r" style="right:95px"><i class="q1">1</i>3</span></div><div class="abs" style="left:246px;top:817px;width:967px;height:8px;border-radius:4px;background:#d3d3d3"></div>
<div class="abs" style="left:246px;top:817px;width:827px;height:8px;border-radius:4px;background:#9b9b9b"></div>
<svg class="abs" style="left:1255px;top:811px" width="97" height="22" viewBox="1255 811 97 22">
 <rect x="1255.5" y="811.5" width="95.5" height="21" fill="#fff" stroke="#a9a9a9" stroke-width="1"/>
 <defs><linearGradient id="nb" x1="0" y1="0" x2="0" y2="1"><stop offset="0" stop-color="#fff"/><stop offset="1" stop-color="#eeeeee"/></linearGradient></defs>
 <rect x="1256" y="812" width="23" height="20" fill="url(#nb)"/>
 <rect x="1280" y="812" width="23" height="20" fill="url(#nb)"/>
 <rect x="1279" y="811" width="1" height="21" fill="#a9a9a9"/>
 <rect x="1303" y="811" width="1" height="21" fill="#a9a9a9"/>
 <rect x="1327" y="811" width="1" height="21" fill="#a9a9a9"/>
 <rect x="1263" y="819" width="9" height="1.5" fill="#2e2e2e"/>
 <path d="M1263 825 L1267.5 820.5 L1272 825Z" fill="#2e2e2e"/>
 <path d="M1286.8 825 L1291.4 820 L1296 825Z" fill="#2e2e2e"/>
 <path d="M1311 820 L1315.5 825 L1320 820Z" fill="#b5b5b5"/>
 <path d="M1335 820 L1339.5 824.5 L1344 820Z" fill="#b5b5b5"/>
 <rect x="1335" y="824.5" width="9" height="1.5" fill="#b5b5b5"/>
</svg>
<svg class="abs" style="left:228px;top:814px" width="1004" height="14" viewBox="228 814 1004 14">
 <path d="M236 818 L232 821 L236 824Z" fill="#c2c2c2"/>
 <path d="M1223 818 L1227.2 821 L1223 824Z" fill="#333"/>
</svg>

</body></html>
